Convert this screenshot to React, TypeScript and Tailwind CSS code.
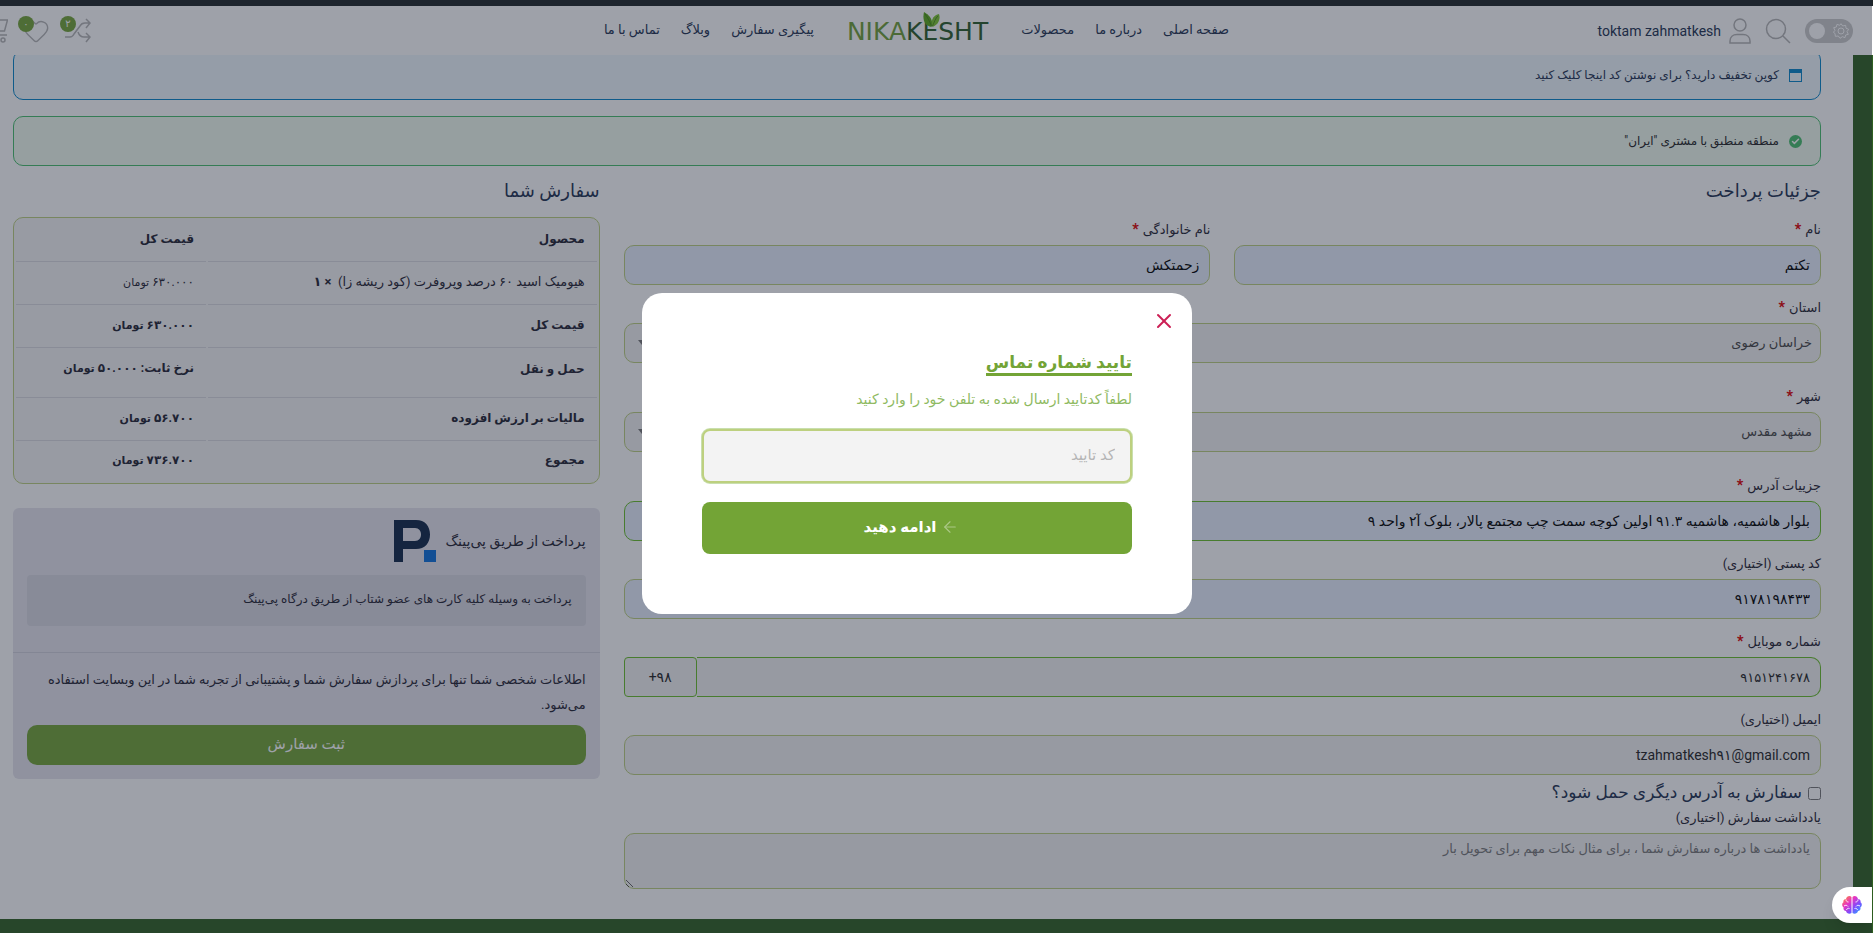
import { useState, type ReactNode } from "react";
import clsx from "clsx";
import { ArrowLeft, Check, Heart, X } from "lucide-react";

const navRight = ["صفحه اصلی", "درباره ما", "محصولات"];
const navLeft = ["پیگیری سفارش", "وبلاگ", "تماس با ما"];

type OrderRow = {
  label: string;
  prefix?: string;
  amount: string;
  tall?: boolean;
};

const orderTotals: OrderRow[] = [
  { label: "قیمت کل", amount: "۶۳۰.۰۰۰" },
  { label: "حمل و نقل", prefix: "نرخ ثابت: ", amount: "۵۰.۰۰۰", tall: true },
  { label: "مالیات بر ارزش افزوده", amount: "۵۶.۷۰۰" },
  { label: "مجموع", amount: "۷۳۶.۷۰۰" }
];

const controlClass = "block h-10 w-full rounded-[10px] border outline-none";

function Price({ amount }: { amount: string }) {
  return (
    <>
      {amount} <span className="text-[11px]">تومان</span>
    </>
  );
}

function Field({
  id,
  label,
  required,
  className,
  children
}: {
  id: string;
  label: string;
  required?: boolean;
  className?: string;
  children: ReactNode;
}) {
  return (
    <div className={className}>
      <label htmlFor={id} className="block h-[26px] text-[13px] leading-[22px] text-[#1f2230]">
        {label}
        {required && <span className="mr-1 text-sm leading-none font-black text-[#e00000]">*</span>}
      </label>
      {children}
    </div>
  );
}

function TextField({
  id,
  label,
  value,
  required,
  filled,
  valid,
  ltr,
  type = "text"
}: {
  id: string;
  label: string;
  value: string;
  required?: boolean;
  filled?: boolean;
  valid?: boolean;
  ltr?: boolean;
  type?: string;
}) {
  const [text, setText] = useState(value);

  return (
    <Field id={id} label={label} required={required}>
      <input
        id={id}
        type={type}
        value={text}
        dir={ltr ? "ltr" : "rtl"}
        onChange={(event) => setText(event.target.value)}
        className={clsx(
          controlClass,
          "px-2.5 text-right text-sm",
          filled ? "bg-[#e8f0fe] text-black" : "bg-[#f2f2f2] text-[#222222]",
          valid ? "border-[#69bf29]" : "border-[#bdd07f]"
        )}
      />
    </Field>
  );
}

function SelectField({ id, label, value }: { id: string; label: string; value: string }) {
  return (
    <Field id={id} label={label} required className="pb-[11px]">
      <div className="relative">
        <select
          id={id}
          className={clsx(controlClass, "appearance-none border-[#bdd07f] bg-[#f2f2f2] px-2 text-[13px] text-[#444444]")}
        >
          <option>{value}</option>
        </select>
        <svg viewBox="0 0 8 5" className="pointer-events-none absolute left-3.5 top-[17px] h-[5px] w-2 fill-[#777777]">
          <path d="M0 0h8L4 5z" />
        </svg>
      </div>
    </Field>
  );
}

function Logo() {
  return (
    <a href="#" className="relative mx-3 block pt-0.5 text-[25px] leading-7 font-['DejaVu_Sans']" dir="ltr">
      <span className="text-[#6f9f35]">NIKA</span>
      <span className="text-[#2a5c28]">KESHT</span>
      <svg viewBox="0 0 18 16" className="absolute -top-1 left-[76px] h-[15px] w-[17px]">
        <path d="M1 0C8 4 11 9 9 16 2 15-1 9 1 0Z" fill="#59a818" />
        <path d="M17 2C10 4 8 9 10 16c6-2 9-8 7-14Z" fill="#7cc62f" />
        <path d="M2 2c3 4 5 8 7 13M16 4c-3 3-4 7-6 11" fill="none" stroke="#3c7d12" strokeWidth=".8" />
      </svg>
    </a>
  );
}

function IconBadge({ count, children, label }: { count: string; label: string; children: ReactNode }) {
  return (
    <button type="button" aria-label={label} className="relative block text-[#b4b4b4]">
      {children}
      <span className="absolute -top-px -left-1 flex size-4 items-center justify-center rounded-full bg-[#73a436] text-[10px] leading-none text-white">
        {count}
      </span>
    </button>
  );
}

function Header() {
  return (
    <header className="fixed inset-x-0 top-0 z-10 overflow-hidden border-t-[6px] border-[#1e2527] bg-white">
      <div className="-ml-5 mr-5 grid h-[49px] grid-cols-[1fr_auto_1fr] items-center text-[#20304f]">
        <div className="flex items-center gap-3.5">
          <button
            type="button"
            aria-label="حالت تیره"
            className="flex h-6 w-12 items-center justify-between rounded-full bg-[#cacaca] px-1"
          >
            <svg viewBox="0 0 24 24" className="size-4 fill-none stroke-white stroke-[1.5]">
              <circle cx="12" cy="12" r="4.5" />
              <path d="m12 1 2.500 3.500L19 3.500l.5 4.300L23.500 9.500 21 13l2 4-4 1-1 4-4-1.500L10.500 23 8 19.500l-4.500.5-.5-4.300L.5 14 3 11 1 7l4-1 1-4 4 1.500z" />
            </svg>
            <span className="size-4 rounded-full bg-white" />
          </button>
          <button type="button" aria-label="جستجو">
            <svg viewBox="0 0 26 26" className="size-[26px] fill-none stroke-[#b4b4b4] stroke-[1.5]">
              <circle cx="11" cy="11" r="9.500" />
              <path d="m18 18 7 7" />
            </svg>
          </button>
          <a href="#" className="flex items-center gap-2 font-['Roboto'] text-sm">
            <svg viewBox="0 0 22 26" className="h-[26px] w-[22px] fill-none stroke-[#b4b4b4] stroke-[1.5]">
              <circle cx="11" cy="7" r="6" />
              <path d="M1 25v-2c0-4 3-6.500 7-6.500h6c4 0 7 2.500 7 6.500v2z" />
            </svg>
            toktam zahmatkesh
          </a>
        </div>
        <nav className="flex items-center gap-[21px] text-[13px] leading-5">
          {navRight.map((item) => (
            <a key={item} href="#" className="pb-0.5">
              {item}
            </a>
          ))}
          <Logo />
          {navLeft.map((item) => (
            <a key={item} href="#" className="pb-0.5">
              {item}
            </a>
          ))}
        </nav>
        <div className="flex items-center justify-end gap-3.5">
          <IconBadge count="۲" label="مقایسه">
            <svg viewBox="0 0 27 28" className="h-7 w-[27px] fill-none stroke-current stroke-[1.5]">
              <path d="M1 20h5c2 0 3-1 4-3l6-8c1-2 2-3 5-3h5M22 2l4 4-4 5M14 15c1 3 3 5 6 5h6M22 16l4 4-4 5" />
            </svg>
          </IconBadge>
          <IconBadge count="۰" label="علاقه‌مندی‌ها">
            <Heart className="size-7" strokeWidth={1.2} />
          </IconBadge>
          <button type="button" aria-label="سبد خرید" className="text-[#b4b4b4]">
            <svg viewBox="0 0 28 26" className="h-[26px] w-7 fill-none stroke-current stroke-[1.5]">
              <path d="M0 1h5l4 16h18M6 2h21.500l-3 11H9" />
              <circle cx="11" cy="22" r="2" />
              <circle cx="23" cy="22" r="2" />
            </svg>
          </button>
        </div>
      </div>
    </header>
  );
}

function BillingForm() {
  const [phone, setPhone] = useState("۹۱۵۱۲۴۱۶۷۸");

  return (
    <section className="col-span-2">
      <h3 className="mb-2 h-[42px] text-lg leading-[44px] text-[#20304f]">جزئیات پرداخت</h3>
      <div className="flex flex-col gap-3">
        <div className="grid grid-cols-2 gap-6">
          <TextField id="first-name" label="نام" value="تکتم" required filled />
          <TextField id="last-name" label="نام خانوادگی" value="زحمتکش" required filled />
        </div>
        <SelectField id="state" label="استان" value="خراسان رضوی" />
        <SelectField id="city" label="شهر" value="مشهد مقدس" />
        <TextField
          id="address"
          label="جزییات آدرس"
          value="بلوار هاشمیه، هاشمیه ۹۱.۳ اولین کوچه سمت چپ مجتمع پالار، بلوک آ۲ واحد ۹"
          required
          filled
          valid
        />
        <TextField id="postcode" label="کد پستی (اختیاری)" value="۹۱۷۸۱۹۸۴۳۳" filled ltr />
        <Field id="phone" label="شماره موبایل" required>
          <div className="flex">
            <input
              id="phone"
              type="tel"
              dir="ltr"
              value={phone}
              onChange={(event) => setPhone(event.target.value)}
              className="h-10 min-w-0 flex-1 rounded-r-[10px] border border-l-0 border-[#69bf29] bg-[#f2f2f2] px-2.5 text-right text-[13px] text-[#222222] outline-none"
            />
            <button
              type="button"
              dir="ltr"
              className="h-10 w-[73px] rounded border border-[#69bf29] bg-[#f2f2f2] text-sm text-[#222222]"
            >
              +۹۸
            </button>
          </div>
        </Field>
        <TextField id="email" label="ایمیل (اختیاری)" value="tzahmatkesh۹۱@gmail.com" ltr />
      </div>
      <label className="mt-1 flex h-7 items-center gap-1.5 text-[17px] text-[#20304f]">
        <input type="checkbox" className="size-[13px]" />
        سفارش به آدرس دیگری حمل شود؟
      </label>
      <Field id="notes" label="یادداشت سفارش (اختیاری)">
        <textarea
          id="notes"
          placeholder="یادداشت ها درباره سفارش شما ، برای مثال نکات مهم برای تحویل بار"
          className="block h-14 w-full rounded-[10px] border border-[#bdd07f] bg-[#f2f2f2] px-2.5 py-1 text-[13px] leading-[22px] placeholder:text-[#777777]"
        />
      </Field>
    </section>
  );
}

function OrderTable() {
  return (
    <table className="w-full border-separate border-spacing-0.5 rounded-[10px] border border-[#bdd07f] bg-[#f5f5f5] text-xs text-[#1f2230]">
      <thead>
        <tr className="h-[42px]">
          <th className="border-b border-[#dadbe0] px-3 pb-1 text-right">محصول</th>
          <th className="w-[190px] border-b border-[#dadbe0] px-3 pb-1 text-right">قیمت کل</th>
        </tr>
      </thead>
      <tbody>
        <tr className="h-[41px]">
          <td className="border-b border-[#dadbe0] px-3 pb-1 text-[13px]">
            هیومیک اسید ۶۰ درصد وپروفرت (کود ریشه زا)&nbsp; <strong>× ۱</strong>
          </td>
          <td className="border-b border-[#dadbe0] px-3 pb-1">
            <Price amount="۶۳۰.۰۰۰" />
          </td>
        </tr>
        {orderTotals.map((row, index) => {
          const last = index === orderTotals.length - 1;
          const cell = clsx(
            "px-3 text-right font-bold",
            !last && "border-b border-[#dadbe0]",
            row.tall ? "pb-2.5" : "pb-1"
          );
          return (
            <tr key={row.label} className={clsx(row.tall ? "h-12" : last ? "h-[38px]" : "h-[41px]")}>
              <th className={cell}>{row.label}</th>
              <td className={cell}>
                {row.prefix}
                <Price amount={row.amount} />
              </td>
            </tr>
          );
        })}
      </tbody>
    </table>
  );
}

function OrderSummary() {
  return (
    <section>
      <h3 className="mb-1.5 h-[42px] text-lg leading-[44px] text-[#20304f]">سفارش شما</h3>
      <OrderTable />
      <div className="mt-6 rounded-md bg-[#e6e5ee] pb-3.5 text-[13px] text-[#1f2230]">
        <div className="border-b border-[#d0d0da] px-3.5 pt-3 pb-[26px]">
          <div className="flex items-center gap-2.5">
            <span className="text-sm">پرداخت از طریق پی‌پینگ</span>
            <svg viewBox="0 0 42 42" className="size-[42px]">
              <path
                fill="#0f2547"
                fillRule="evenodd"
                d="M0 0h22c9 0 14 6 14 14.500S31 29 22 29H9v13H0zm9 8v13h12c4 0 6-3 6-6.500S25 8 21 8z"
              />
              <path fill="#0b6fdb" d="M30 30h12v12H30z" />
            </svg>
          </div>
          <p className="mt-[13px] rounded-sm bg-[#d9d8e2] px-3.5 pt-3.5 pb-[17px] text-xs leading-5">
            پرداخت به وسیله کلیه کارت های عضو شتاب از طریق درگاه پی‌پینگ
          </p>
        </div>
        <div className="px-3.5 pt-3.5">
          <p className="mb-2 leading-[25px]">
            اطلاعات شخصی شما تنها برای پردازش سفارش شما و پشتیبانی از تجربه شما در این وبسایت استفاده می‌شود.
          </p>
          <button type="button" className="h-10 w-full rounded-[10px] bg-[#73a436] pb-0.5 text-[15px] text-white">
            ثبت سفارش
          </button>
        </div>
      </div>
    </section>
  );
}

function VerifyDialog() {
  const [code, setCode] = useState("");

  return (
    <div className="fixed inset-y-0 left-0 right-px z-20 flex items-center justify-center bg-[#1e2538]/43 pr-[38px] pb-[26px]">
      <div
        role="dialog"
        aria-labelledby="verify-title"
        className="relative w-[550px] rounded-[20px] bg-white px-[60px] pt-[54px] pb-[60px]"
      >
        <button type="button" aria-label="بستن" className="absolute top-4 right-4 text-[#cc1f55]">
          <X className="size-6" strokeWidth={2} />
        </button>
        <form onSubmit={(event) => event.preventDefault()}>
          <h2 id="verify-title" className="flex h-[30px] text-[17px] leading-[30px] font-bold text-[#73a436]">
            <span className="h-[29px] border-b-[3px] border-[#73a436]">تایید شماره تماس</span>
          </h2>
          <label htmlFor="code" className="mt-2.5 block h-[42px] text-sm leading-6 text-[#8fba62]">
            لطفاً کدتایید ارسال شده به تلفن خود را وارد کنید
          </label>
          <input
            id="code"
            value={code}
            onChange={(event) => setCode(event.target.value)}
            placeholder="کد تایید"
            className="block h-[54px] w-full rounded-lg border-2 border-[#bdd07f] bg-[#f3f3f3] px-[15px] pb-0.5 text-[15px] ring-1 ring-[#c9dfae] outline-none placeholder:text-[#b5b5b5]"
          />
          <button
            type="submit"
            className="mt-[19px] flex h-[52px] w-full items-center justify-center gap-1 rounded-lg bg-[#73a436] pr-3 pb-0.5 text-[15px] font-bold text-white"
          >
            <ArrowLeft className="size-[18px] opacity-40" strokeWidth={1.5} />
            ادامه دهید
          </button>
        </form>
      </div>
    </div>
  );
}

function AssistantButton() {
  return (
    <button
      type="button"
      aria-label="دستیار"
      className="fixed right-px bottom-2.5 z-30 flex h-9 w-10 items-center justify-center rounded-l-full bg-white shadow-lg"
    >
      <svg viewBox="0 0 20 18" className="h-[18px] w-5">
        <defs>
          <linearGradient id="brain" x1="0" y1="0" x2="1" y2="1">
            <stop offset="0" stopColor="#ff9a1f" />
            <stop offset=".35" stopColor="#e935c1" />
            <stop offset=".65" stopColor="#7a4dff" />
            <stop offset="1" stopColor="#22b8ff" />
          </linearGradient>
        </defs>
        <path
          fill="url(#brain)"
          d="M9.500 1v16c-2 1.500-5 .5-5.500-2-2 0-3-2-2.300-3.500C-.3 10-.3 7.500 1.500 6.300 1 4.500 2 3 4 3 4.500 0 8-.8 9.500 1Zm1 0v16c2 1.500 5 .5 5.500-2 2 0 3-2 2.300-3.500 2-1.500 2-4 .2-5.200C19 4.500 18 3 16 3c-.5-3-4-3.800-5.500-2Z"
        />
        <path
          fill="none"
          stroke="#fff"
          strokeWidth=".9"
          d="M4 3.500c0 1.500 1 2.500 2.500 2.500M2 10c1.500-1 3-1 4 .5M4.500 14c.3-1.300 1.500-2 3-1.500M16 3.500C16 5 15 6 13.500 6M18 10c-1.500-1-3-1-4 .5M15.500 14c-.3-1.300-1.500-2-3-1.500"
        />
      </svg>
    </button>
  );
}

export default function App() {
  return (
    <div dir="rtl" className="min-h-screen overflow-hidden bg-[#2f6021] pr-5 pb-3.5 font-['Roboto','DejaVu_Sans',sans-serif]">
      <Header />
      <main className="bg-white pt-[50px] pr-8 pb-[30px] pl-[13px]">
        <div className="flex h-[50px] items-center gap-2.5 rounded-[10px] border border-[#0585c9] bg-[#eff8fd] px-[18px] text-xs text-[#20304f]">
          <svg viewBox="0 0 13 13" className="size-[13px] fill-[#0585c9]">
            <path fillRule="evenodd" d="M0 0h13v13H0zm1 4v8h11V4z" />
          </svg>
          <p>
            کوپن تخفیف دارید؟ <a href="#">برای نوشتن کد اینجا کلیک کنید</a>
          </p>
        </div>
        <div className="mt-4 flex h-[50px] items-center gap-2.5 rounded-[10px] border border-[#47bf6b] bg-[#f1fcf0] px-[18px] text-xs text-[#222222]">
          <span className="flex size-[13px] items-center justify-center rounded-full bg-[#47bf6b] text-white">
            <Check className="size-[9px]" strokeWidth={4} />
          </span>
          <p>منطقه منطبق با مشتری "ایران"</p>
        </div>
        <div className="mt-[3px] grid grid-cols-3 gap-6">
          <BillingForm />
          <OrderSummary />
        </div>
      </main>
      <VerifyDialog />
      <AssistantButton />
    </div>
  );
}
